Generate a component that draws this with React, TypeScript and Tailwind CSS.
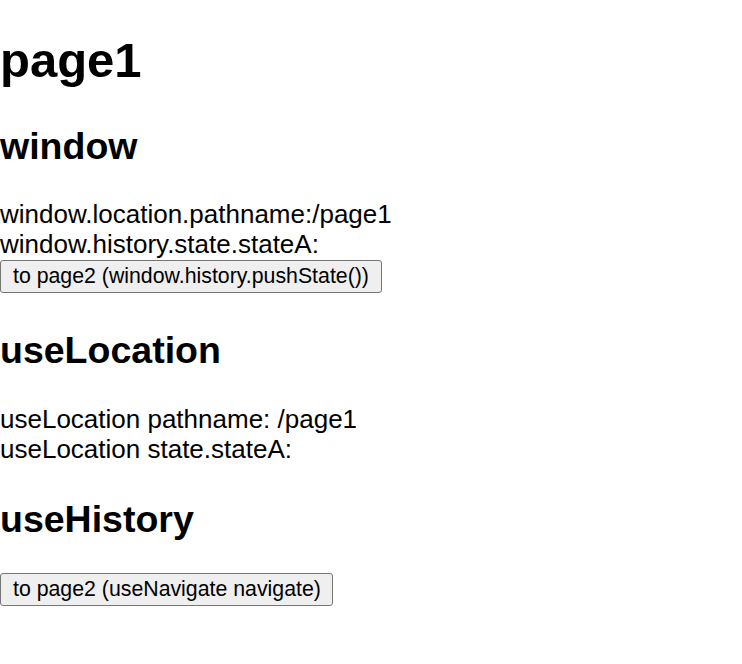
export default function App() {
  const font = { fontFamily: '"Liberation Sans", Arial, sans-serif' };
  return (
    <div className="min-h-screen bg-white text-black" style={font}>
      <div className="pt-[32px]">
        <h1 className="text-[49px] leading-[56px] font-bold">page1</h1>
        <h2 className="mt-[37px] text-[37.5px] leading-[43px] font-bold">window</h2>
        <div className="mt-[30.5px] text-[26px] leading-[30px]">
          <div>window.location.pathname:/page1</div>
          <div>window.history.state.stateA:</div>
        </div>
        <button className="mt-[1.5px] block h-[33px] w-[382px] whitespace-nowrap rounded-[3px] border border-[#767676] bg-[#efefef] px-[12px] text-left text-[21.3px] leading-[31px]">
          to page2 (window.history.pushState())
        </button>
        <h2 className="mt-[35.5px] text-[37.5px] leading-[43px] font-bold">useLocation</h2>
        <div className="mt-[32.5px] text-[26px] leading-[30px]">
          <div>useLocation pathname: /page1</div>
          <div>useLocation state.stateA:</div>
        </div>
        <h2 className="mt-[33.5px] text-[37.5px] leading-[43px] font-bold">useHistory</h2>
        <button className="mt-[32.5px] block h-[33px] w-[333px] whitespace-nowrap rounded-[3px] border border-[#767676] bg-[#efefef] px-[12px] text-left text-[21.3px] leading-[31px]">
          to page2 (useNavigate navigate)
        </button>
      </div>
    </div>
  );
}
